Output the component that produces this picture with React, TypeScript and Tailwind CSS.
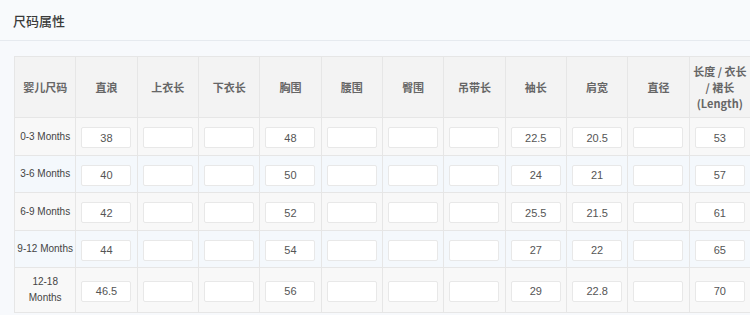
import React from 'react';

const columns = ['婴儿尺码', '直浪', '上衣长', '下衣长', '胸围', '腰围', '臀围', '吊带长', '袖长', '肩宽', '直径'];

type Row = { size: string; values: string[]; height: string };

// values follow the column order after the size label
const rows: Row[] = [
  { size: '0-3 Months', values: ['38', '', '', '48', '', '', '', '22.5', '20.5', '', '53'], height: 'h-[38px]' },
  { size: '3-6 Months', values: ['40', '', '', '50', '', '', '', '24', '21', '', '57'], height: 'h-[37px]' },
  { size: '6-9 Months', values: ['42', '', '', '52', '', '', '', '25.5', '21.5', '', '61'], height: 'h-[38px]' },
  { size: '9-12 Months', values: ['44', '', '', '54', '', '', '', '27', '22', '', '65'], height: 'h-[37px]' },
  { size: '12-18 Months', values: ['46.5', '', '', '56', '', '', '', '29', '22.8', '', '70'], height: 'h-[45px]' },
];

const App: React.FC = () => {
  return (
    <div className="w-[750px] h-[315px] overflow-hidden bg-[#f7f9fc] font-['Liberation_Sans','Noto_Sans_CJK_SC',sans-serif]">
      <div className="h-[41px] border-b border-[#e6eaef] bg-[#f8fafc] px-[13px] flex items-center">
        <h2 className="text-[13px] font-medium text-[#3a3a3a] font-['Noto_Sans_CJK_SC',sans-serif] leading-none">尺码属性</h2>
      </div>
      <div className="pl-[14px] pt-[15px]">
        <table className="table-fixed border-collapse w-[737px]">
          <thead>
            <tr className="h-[61px] bg-[#f3f3f3]">
              {columns.map((c) => (
                <th
                  key={c}
                  className="border border-[#e6e6e6] p-0 text-[11px] font-bold text-[#666] font-['Noto_Sans_CJK_SC',sans-serif] text-center align-middle"
                >
                  {c}
                </th>
              ))}
              <th className="border border-[#e6e6e6] px-[2px] py-0 text-[11px] leading-[16px] font-bold text-[#666] text-center align-middle font-['Noto_Sans_CJK_SC',sans-serif]">
                长度 / 衣长 / 裙长 (Length)
              </th>
            </tr>
          </thead>
          <tbody>
            {rows.map((r, i) => (
              <tr key={r.size} className={`${r.height} ${i % 2 === 1 ? 'bg-[#f4f8fc]' : 'bg-[#f8f8f8]'}`}>
                <td className="border border-[#e6e6e6] px-[2px] py-0 text-[10px] leading-[16px] text-[#444] text-center align-middle">
                  {r.size}
                </td>
                {r.values.map((v, j) => (
                  <td key={j} className="border border-[#e6e6e6] p-0 text-center align-middle">
                    <input
                      readOnly
                      defaultValue={v}
                      className="w-[50px] h-[21px] border border-[#e8e8e8] rounded-[2px] bg-white text-center text-[11px] text-[#555] outline-none"
                    />
                  </td>
                ))}
              </tr>
            ))}
          </tbody>
        </table>
      </div>
    </div>
  );
};

export default App;
